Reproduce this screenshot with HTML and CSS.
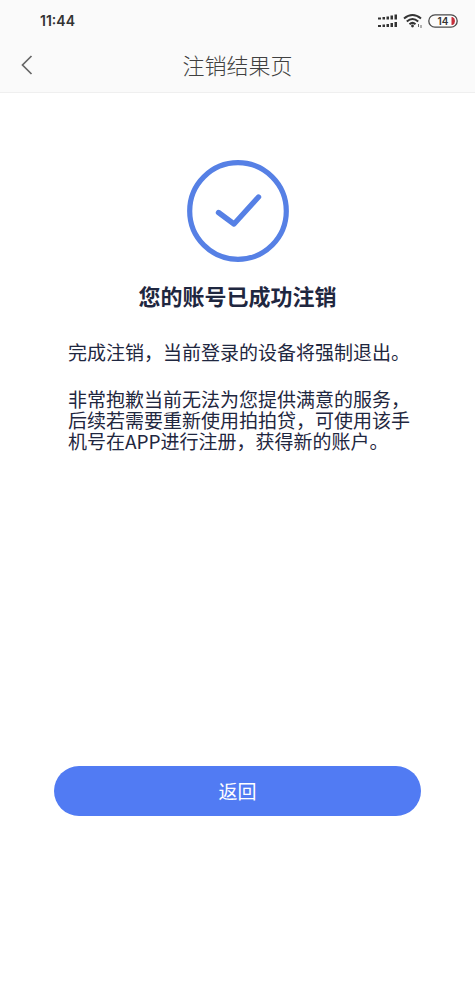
FILE: index.html
```html
<!DOCTYPE html>
<html lang="zh-CN">
<head>
<meta charset="utf-8">
<meta name="viewport" content="width=device-width, initial-scale=1">
<title>注销结果页</title>
<link rel="stylesheet" href="styles.css">
</head>
<body>
<header class="top">
  <div class="status">
    <span class="time">11:44</span>
    <div class="indicators">
      <svg class="signal" width="20" height="16" viewBox="0 0 20 16" aria-hidden="true">
        <g fill="#333">
          <path d="M0 4.500h3v2H0zM4.500 4h2.500v2.500H4.500zM8.500 3.500h2.500v3H8.500zM12.500 2.500h2.500v4h-2.500zM16.500 1.500h2.500v5h-2.500z"/>
          <path d="M0 12h3v2H0zM4.500 11.500h2.500v2.500H4.500zM8.500 11h2.500v3H8.500zM12.500 10h2.500v4h-2.500zM16.500 9h2.500v5h-2.500z"/>
        </g>
      </svg>
      <svg class="wifi" width="20" height="16" viewBox="0 0 20 16" aria-hidden="true">
        <g fill="none" stroke="#333" stroke-width="2">
          <path d="M1 5.500Q9.500-1.500 18 5.500"/>
          <path d="M3.800 8.500Q9.500 3.500 15.200 8.500"/>
          <path d="M6.500 11.200Q9.500 8.500 12.500 11.200"/>
        </g>
        <circle cx="9.500" cy="13" r="1.400" fill="#333"/>
        <path d="M15.500 11v3M18 12v3" stroke="#666"/>
      </svg>
      <svg class="battery" width="30" height="14" viewBox="0 0 30 14" role="img" aria-label="14%">
        <rect x=".8" y=".8" width="28.400" height="12.400" rx="6.200" fill="#fcfcfc" stroke="#4a4a4a" stroke-width="1.300"/>
        <path d="M23.500 3H24.500Q27 4 27 7T24.500 11H23.500Z" fill="#c52f3b"/>
        <text class="level" x="15" y="11" text-anchor="middle">14</text>
      </svg>
    </div>
  </div>
  <nav class="bar">
    <button class="back" type="button" aria-label="返回上一页">
      <svg width="12" height="20" viewBox="0 0 12 20" aria-hidden="true"><path d="M10.500 1L1.500 10l9 9" fill="none" stroke="#666" stroke-width="1.700"/></svg>
    </button>
    <h1 class="page-title">注销结果页</h1>
  </nav>
</header>
<main class="content">
  <svg class="success" width="102" height="102" viewBox="0 0 102 102" aria-hidden="true">
    <circle cx="51" cy="51" r="48.300" fill="none" stroke="#5680e5" stroke-width="5.200"/>
    <path d="M31.500 52.500L47 64L71.500 37" fill="none" stroke="#5680e5" stroke-width="5.400" stroke-linecap="round" stroke-linejoin="round"/>
  </svg>
  <h2 class="headline">您的账号已成功注销</h2>
  <div class="message">
    <p>完成注销，当前登录的设备将强制退出。</p>
    <p>非常抱歉当前无法为您提供满意的服务，后续若需要重新使用拍拍贷，可使用该手机号在APP进行注册，获得新的账户。</p>
  </div>
  <button class="return" type="button">返回</button>
</main>
</body>
</html>
```
FILE: styles.css
```css
* {
  box-sizing: border-box;
}

body {
  margin: 0;
  min-height: 100vh;
  background: #fff;
  color: #1f2740;
  font-family: "Noto Sans CJK SC", sans-serif;
}

h1, h2, p {
  margin: 0;
}

button {
  border: 0;
  padding: 0;
  font-family: inherit;
  cursor: pointer;
}

svg {
  display: block;
}

.top {
  background: #fafafa;
  border-bottom: 1px solid #efefef;
}

.status {
  display: flex;
  align-items: center;
  justify-content: space-between;
  height: 40px;
  padding: 2px 17px 0 40px;
}

.time {
  color: #333;
  font: 600 14px/20px Inter, sans-serif;
}

.indicators {
  display: flex;
  align-items: center;
  gap: 5px;
}

.level {
  fill: #333;
  font: 600 10px Inter, sans-serif;
}

.bar {
  display: grid;
  grid-template-columns: 52px 1fr 52px;
  align-items: center;
  height: 52px;
  padding-bottom: 4px;
}

.back {
  display: flex;
  align-items: center;
  height: 44px;
  padding: 2px 0 0 21px;
  background: none;
}

.page-title {
  color: #404040;
  font-size: 22px;
  font-weight: 300;
  line-height: 32px;
  text-align: center;
}

.content {
  display: flex;
  flex-direction: column;
  align-items: center;
  padding: 67px 54px 40px;
}

.headline {
  margin-top: 17px;
  font-size: 22px;
  font-weight: 700;
  line-height: 32px;
}

.message {
  display: grid;
  gap: 26px;
  align-self: stretch;
  margin-top: 30px;
  padding: 0 5px 0 14px;
  font-size: 19px;
  line-height: 21px;
}

.return {
  align-self: stretch;
  height: 50px;
  margin-top: 315px;
  padding-bottom: 2px;
  border-radius: 25px;
  background: #517bf3;
  color: #fff;
  font-size: 19px;
}
```
